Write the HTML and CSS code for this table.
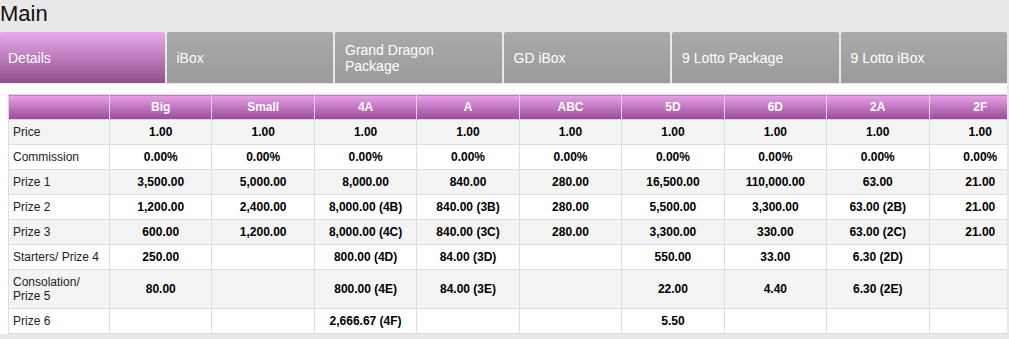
FILE: index.html
```html
<!DOCTYPE html>
<html lang="en">
  <head>
    <meta charset="UTF-8" />
    <meta name="viewport" content="width=device-width, initial-scale=1.0" />
    <title>Main</title>
    <link rel="stylesheet" href="styles.css">
  </head>
  <body>
    <h1>Main</h1>
    <nav class="tabs">
      <div class="tab active">Details</div>
      <div class="tab">iBox</div>
      <div class="tab">Grand Dragon<br />Package</div>
      <div class="tab">GD iBox</div>
      <div class="tab">9 Lotto Package</div>
      <div class="tab">9 Lotto iBox</div>
    </nav>
    <div class="panel">
      <table class="prizes">
        <colgroup>
          <col class="label-col" />
          <col span="9" />
        </colgroup>
        <thead>
          <tr>
            <th></th>
            <th>Big</th>
            <th>Small</th>
            <th>4A</th>
            <th>A</th>
            <th>ABC</th>
            <th>5D</th>
            <th>6D</th>
            <th>2A</th>
            <th>2F</th>
          </tr>
        </thead>
        <tbody>
          <tr>
            <td>Price</td>
            <td>1.00</td><td>1.00</td><td>1.00</td><td>1.00</td><td>1.00</td><td>1.00</td><td>1.00</td><td>1.00</td><td>1.00</td>
          </tr>
          <tr>
            <td>Commission</td>
            <td>0.00%</td><td>0.00%</td><td>0.00%</td><td>0.00%</td><td>0.00%</td><td>0.00%</td><td>0.00%</td><td>0.00%</td><td>0.00%</td>
          </tr>
          <tr>
            <td>Prize 1</td>
            <td>3,500.00</td><td>5,000.00</td><td>8,000.00</td><td>840.00</td><td>280.00</td><td>16,500.00</td><td>110,000.00</td><td>63.00</td><td>21.00</td>
          </tr>
          <tr>
            <td>Prize 2</td>
            <td>1,200.00</td><td>2,400.00</td><td>8,000.00 (4B)</td><td>840.00 (3B)</td><td>280.00</td><td>5,500.00</td><td>3,300.00</td><td>63.00 (2B)</td><td>21.00</td>
          </tr>
          <tr>
            <td>Prize 3</td>
            <td>600.00</td><td>1,200.00</td><td>8,000.00 (4C)</td><td>840.00 (3C)</td><td>280.00</td><td>3,300.00</td><td>330.00</td><td>63.00 (2C)</td><td>21.00</td>
          </tr>
          <tr>
            <td>Starters/ Prize 4</td>
            <td>250.00</td><td></td><td>800.00 (4D)</td><td>84.00 (3D)</td><td></td><td>550.00</td><td>33.00</td><td>6.30 (2D)</td><td></td>
          </tr>
          <tr>
            <td>Consolation/<br />Prize 5</td>
            <td>80.00</td><td></td><td>800.00 (4E)</td><td>84.00 (3E)</td><td></td><td>22.00</td><td>4.40</td><td>6.30 (2E)</td><td></td>
          </tr>
          <tr>
            <td>Prize 6</td>
            <td></td><td></td><td>2,666.67 (4F)</td><td></td><td></td><td>5.50</td><td></td><td></td><td></td>
          </tr>
        </tbody>
      </table>
    </div>
  </body>
</html>
```

FILE: styles.css
```css
html {
  font-family: "Liberation Sans", Arial, sans-serif;
  background: #e8e8e8;
}

body {
  margin: 0;
}

h1 {
  margin: 0;
  height: 32px;
  font-size: 22px;
  line-height: 28px;
  font-weight: normal;
  color: #111111;
}

/* tabs */
.tabs {
  display: flex;
  gap: 2px;
  width: 1007px;
  height: 51px;
  margin-bottom: 1px;
}
.tab {
  flex: 1;
  display: flex;
  align-items: center;
  padding-left: 10px;
  color: #ffffff;
  font-size: 14px;
  line-height: 16px;
  border-radius: 2px 2px 0 0;
  background: linear-gradient(#a9a9a9, #9b9b9b);
}
.tab.active {
  padding-left: 8px;
  background: linear-gradient(#eaa9ea, #8f4f8f);
}

/* table panel */
.panel {
  width: 999px;
  padding: 10px 0 0 8px;
  background: #ffffff;
  overflow: hidden;
}

.prizes {
  table-layout: fixed;
  width: 1024px;
  border-collapse: collapse;
  font-size: 12px;
  line-height: 14px;
  color: #000000;
}
.prizes .label-col {
  width: 101px;
}
.prizes th,
.prizes td {
  border: 1px solid #dedede;
  padding: 5px 0;
  text-align: center;
  font-weight: bold;
  white-space: nowrap;
}
.prizes th {
  color: #ffffff;
  border-color: #e7cfe7;
  border-top-color: #dddddd;
  background: linear-gradient(#e7a2e7, #994a99);
}
.prizes td:first-child {
  text-align: left;
  padding-left: 4px;
  font-weight: normal;
  color: #222222;
}
.prizes tbody tr:nth-child(odd) {
  background: #f4f4f4;
}
```
